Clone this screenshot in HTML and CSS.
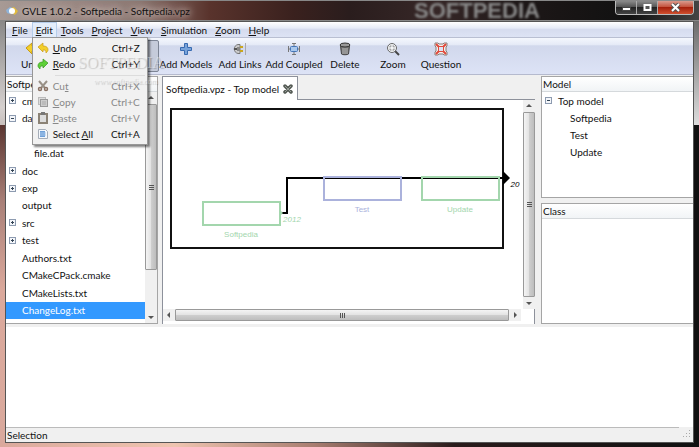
FILE: index.html
```html
<!DOCTYPE html>
<html lang="en">
<head>
  <meta charset="utf-8">
  <title>GVLE 1.0.2 - Softpedia - Softpedia.vpz</title>
  <link rel="stylesheet" href="styles.css">
</head>
<body>
  <div class="window">
    <header class="titlebar">
      <svg class="app-icon" width="12" height="10" viewBox="0 0 12 10">
        <path d="M0 4l4-3 3 1-3 6-3-1z" fill="#8fb3d9"/>
        <path d="M12 5L8 1 5 2l3 7 2-1z" fill="#e0b93c"/>
        <circle cx="6" cy="5" r="3" fill="#fff"/>
      </svg>
      <h1 class="title">GVLE 1.0.2 - Softpedia - Softpedia.vpz</h1>
      <span class="glass-mark">SOFTPEDIA</span>
      <div class="window-buttons">
        <button class="win-btn" aria-label="Minimize">
          <svg width="11" height="9" viewBox="0 0 11 9"><rect x="1.5" y="4.500" width="8" height="3" fill="#fff" stroke="#444"/></svg>
        </button>
        <button class="win-btn" aria-label="Maximize">
          <svg width="11" height="9" viewBox="0 0 11 9"><rect x="2.500" y="2" width="6" height="5" fill="#555" stroke="#fff" stroke-width="2"/></svg>
        </button>
        <button class="win-btn close" aria-label="Close">
          <svg width="11" height="9" viewBox="0 0 11 9"><path d="M2 1l7 7M9 1L2 8" stroke="#555" stroke-width="4"/><path d="M2 1l7 7M9 1L2 8" stroke="#fff" stroke-width="2"/></svg>
        </button>
      </div>
    </header>

    <div class="client">
      <nav class="menubar">
        <button class="menu-btn"><u>F</u>ile</button>
        <div class="menu-wrap">
          <button class="menu-btn open" aria-expanded="true"><u>E</u>dit</button>
          <div class="dropdown" role="menu">
            <button class="item" role="menuitem">
              <svg width="12" height="12" viewBox="0 0 12 12"><path d="M1 5l5-4v3c4 0 5 2 5 4 0 1-1 2-2 3 0-3-1-3-3-3v2z" fill="#f3cf2a" stroke="#c99a14" stroke-width=".7"/></svg>
              <span><u>U</u>ndo</span><kbd>Ctrl+Z</kbd>
            </button>
            <button class="item" role="menuitem">
              <svg width="12" height="12" viewBox="0 0 12 12"><path d="M11 5L6 1v3C2 4 1 6 1 8c0 1 1 2 2 3 0-3 1-3 3-3v2z" fill="#5fd038" stroke="#379420" stroke-width=".7"/></svg>
              <span><u>R</u>edo</span><kbd>Ctrl+Y</kbd>
            </button>
            <hr>
            <button class="item" role="menuitem" disabled>
              <svg width="12" height="12" viewBox="0 0 12 12"><path d="M2 1l6 7M10 1L4 8" stroke="#999187" stroke-width="2"/><circle cx="3" cy="9" r="1.500" fill="none" stroke="#8a7264" stroke-width="1.500"/><circle cx="9" cy="9" r="1.500" fill="none" stroke="#8a7264" stroke-width="1.500"/></svg>
              <span>Cu<u>t</u></span><kbd>Ctrl+X</kbd>
            </button>
            <button class="item" role="menuitem" disabled>
              <svg width="12" height="12" viewBox="0 0 12 12"><rect x="1.500" y="1.500" width="7" height="7" fill="#ddd" stroke="#bbb"/><rect x="3.500" y="3.500" width="7" height="7" fill="#ccc" stroke="#999"/><path d="M5 6h4M5 8h4" stroke="#aaa"/></svg>
              <span><u>C</u>opy</span><kbd>Ctrl+C</kbd>
            </button>
            <button class="item" role="menuitem" disabled>
              <svg width="12" height="12" viewBox="0 0 12 12"><rect x="2" y="2" width="8" height="9" fill="#ddd" stroke="#8b8275" stroke-width="2"/><rect x="4" y="0" width="4" height="3" fill="#777"/></svg>
              <span><u>P</u>aste</span><kbd>Ctrl+V</kbd>
            </button>
            <button class="item" role="menuitem">
              <svg width="12" height="12" viewBox="0 0 12 12"><path d="M1.500 1.500h7l2 2v7h-9z" fill="#f4f7fb" stroke="#a5adb8"/><path d="M3 3h5v6H3z" fill="#6fa0d8"/><path d="M3 5h6M3 7h6" stroke="#a9c8ec"/></svg>
              <span>Select <u>A</u>ll</span><kbd>Ctrl+A</kbd>
            </button>
            <span class="mark">SOFTPEDIA</span>
            <span class="mark-url">www.softpedia.com</span>
          </div>
        </div>
        <button class="menu-btn"><u>T</u>ools</button>
        <button class="menu-btn"><u>P</u>roject</button>
        <button class="menu-btn"><u>V</u>iew</button>
        <button class="menu-btn"><u>S</u>imulation</button>
        <button class="menu-btn"><u>Z</u>oom</button>
        <button class="menu-btn"><u>H</u>elp</button>
      </nav>

      <div class="toolbar">
        <button class="tool">
          <svg width="14" height="14" viewBox="0 0 14 14"><path d="M0 6l6-5v3c5 0 7 2 7 5 0 1-1 3-2 4 0-4-2-4-5-4v3z" fill="#f3cf2a" stroke="#c99a14"/></svg>
          Undo
        </button>
        <button class="tool" aria-label="Redo"></button>
        <button class="tool wide pressed" aria-label="Select"></button>
        <button class="tool wide">
          <svg width="14" height="14" viewBox="0 0 14 14"><path d="M5.500 1.500h3v4h4v3h-4v4h-3v-4h-4v-3h4z" fill="#78a3da" stroke="#386bb0"/></svg>
          Add Models
        </button>
        <button class="tool wide">
          <svg width="14" height="14" viewBox="0 0 14 14"><path d="M7 2.500H5c-5 1-5 8 0 9h2z" fill="#ccc" stroke="#777"/><path d="M1 7h3" stroke="#555" stroke-width="2"/><path d="M7 5h3M7 9h3" stroke="#c9a61e" stroke-width="2"/><path d="M4 5h3v4H4z" fill="#888"/><path d="M12.500 1v12" stroke="#aaa"/></svg>
          Add Links
        </button>
        <button class="tool wide">
          <svg width="14" height="14" viewBox="0 0 14 14"><path d="M1.500 4v6M12.500 4v6M1 7h3M10 7h3M5 1.500h4M5 12.500h4M7 1v3M7 10v3" stroke="#777"/><rect x="3.500" y="4.500" width="7" height="5" rx="1" fill="#a9c8ed" stroke="#4677b8"/></svg>
          Add Coupled
        </button>
        <button class="tool">
          <svg width="14" height="14" viewBox="0 0 14 14"><path d="M2.500 4l1 8c1 1 6 1 7 0l1-8z" fill="#777" stroke="#444"/><path d="M5 6v6M7 6v6M9 6v6" stroke="#b5b5b5"/><ellipse cx="7" cy="3" rx="5" ry="2" fill="#999" stroke="#333"/></svg>
          Delete
        </button>
        <button class="tool">
          <svg width="14" height="14" viewBox="0 0 14 14"><path d="M9 9l4 4" stroke="#444" stroke-width="2"/><circle cx="6" cy="6" r="4.500" fill="#f3f5f7" stroke="#666"/><path d="M4 5.500V4h1.500M6.500 4H8v1.500M8 6.500V8H6.500M5.500 8H4V6.500" fill="none" stroke="#888"/></svg>
          Zoom
        </button>
        <button class="tool">
          <svg width="14" height="14" viewBox="0 0 14 14"><path d="M1 1h3l1 1h4l1-1h3v3l-1 1v4l1 1v3h-3l-1-1H5l-1 1H1v-3l1-1V5L1 4z" fill="#f5f0ec" stroke="#8a7d78"/><rect x="4.500" y="4.500" width="5" height="5" fill="#dce3f4" stroke="#e04a3c"/><path d="M2 2l3 3M12 2L9 5M2 12l3-3M12 12L9 9" stroke="#e04a3c" stroke-width="2"/></svg>
          Question
        </button>
      </div>

      <main class="panes">
        <section class="pane files">
          <h2 class="pane-title">Softpedia</h2>
          <div class="files-body">
            <ul class="tree">
              <li><i class="toggle plus"></i>cmake</li>
              <li><i class="toggle"></i>data</li>
              <li></li>
              <li class="child">file.dat</li>
              <li><i class="toggle plus"></i>doc</li>
              <li><i class="toggle plus"></i>exp</li>
              <li>output</li>
              <li><i class="toggle plus"></i>src</li>
              <li><i class="toggle plus"></i>test</li>
              <li>Authors.txt</li>
              <li>CMakeCPack.cmake</li>
              <li>CMakeLists.txt</li>
              <li class="selected">ChangeLog.txt</li>
            </ul>
            <div class="vscroll files-scroll">
              <i class="arrow up"></i>
              <div class="thumb"><i class="grip"></i></div>
              <i class="arrow down"></i>
            </div>
          </div>
        </section>

        <section class="notebook">
          <div class="tabs">
            <div class="tab">
              Softpedia.vpz - Top model
              <button class="tab-close" aria-label="Close tab">
                <svg width="10" height="10" viewBox="0 0 10 10"><path d="M2 2l6 6M8 2L2 8" stroke="#555b55" stroke-width="3.500" stroke-linecap="round"/><path d="M2 2l6 6M8 2L2 8" stroke="#979d97"/></svg>
              </button>
            </div>
            <div class="tabs-rest"></div>
          </div>
          <div class="sheet">
            <svg class="diagram" width="360" height="208" viewBox="163 100 360 208">
              <rect x="171" y="109" width="332" height="139" fill="none" stroke="#111" stroke-width="2"/>
              <path d="M281 213h6v-35h216" fill="none" stroke="#000" stroke-width="2"/>
              <path d="M503 171l7 7-7 7z"/>
              <path d="M280 210l3 3-3 3z" fill="#a3d6ad"/>
              <g fill="none" stroke-width="2">
                <rect x="203" y="202" width="77" height="23" stroke="#a3d6ad"/>
                <rect x="324" y="177" width="77" height="23" stroke="#abb2dc"/>
                <rect x="422" y="177" width="77" height="23" stroke="#a3d6ad"/>
              </g>
              <g class="labels" text-anchor="middle">
                <text class="green" x="241" y="237">Softpedia</text>
                <text class="blue" x="362" y="212">Test</text>
                <text class="green" x="460" y="212">Update</text>
                <text class="green port" x="292" y="222">2012</text>
                <text class="port" x="515" y="187">20</text>
              </g>
            </svg>
            <div class="vscroll">
              <i class="arrow up"></i>
              <div class="thumb"><i class="grip"></i></div>
              <i class="arrow down"></i>
            </div>
            <div class="hscroll">
              <i class="arrow left"></i>
              <div class="thumb"><i class="grip"></i></div>
              <i class="arrow right"></i>
            </div>
          </div>
        </section>

        <aside class="side">
          <section class="pane model">
            <h2 class="pane-title">Model</h2>
            <ul class="tree">
              <li><i class="toggle"></i>Top model</li>
              <li class="child">Softpedia</li>
              <li class="child">Test</li>
              <li class="child">Update</li>
            </ul>
          </section>
          <section class="pane class">
            <h2 class="pane-title">Class</h2>
          </section>
        </aside>
      </main>

      <div class="output"></div>
      <footer class="status">
        <span class="status-text">Selection</span>
        <svg class="size-grip" width="14" height="12" viewBox="0 0 14 12"><path d="M10 3h1v1h-1zM7 6h1v1H7zM10 6h1v1h-1zM4 9h1v1H4zM7 9h1v1H7zM10 9h1v1h-1z" fill="#aaa"/></svg>
      </footer>
    </div>
  </div>
</body>
</html>
```
FILE: styles.css
```css
* {
  box-sizing: border-box;
}

body {
  margin: 0;
  font-family: Lato, "Open Sans", sans-serif;
  font-size: 10px;
  line-height: 14px;
  color: #111;
}

button {
  margin: 0;
  padding: 0;
  border: 0;
  background: none;
  font: inherit;
  color: inherit;
}

svg {
  display: block;
  flex: none;
}

h1, h2, ul {
  margin: 0;
  padding: 0;
  font-size: inherit;
  font-weight: normal;
  list-style: none;
}

/* window frame */
.window {
  display: flex;
  flex-direction: column;
  height: 100vh;
  padding: 0 5px 4px;
  background:
    linear-gradient(90deg, #dba99c, #efc4b0 25%, #a87d70 45%, #2a1b1b 65%, #111) bottom / 100% 4px no-repeat,
    linear-gradient(#555, #ddd 28%, #111 28%) right / 5px 100% no-repeat,
    linear-gradient(#777, #d5d0ce 24%, #c8c0bd 28%, #5b3631 28%, #a98078 45%, #dba99c 65%, #d9a99d) left / 5px 100% no-repeat,
    #222;
}

.titlebar {
  display: flex;
  align-items: center;
  position: relative;
  flex: none;
  height: 21px;
  margin: 0 -5px;
  padding-left: 6px;
  border-top: 1px solid #888;
  border-bottom: 1px solid #888;
  background: linear-gradient(90deg, #a79a95, #8c7771 20%, #59332c 30%, #3a211e 42%, #2a1d1d 50%, #362727 62%, #1d1717 75%, #111 90%, #444);
}

.title {
  margin-left: 4px;
  text-shadow: 0 0 6px #d6c7c1, 0 0 8px #d6c7c1;
}

.glass-mark {
  position: absolute;
  left: 414px;
  top: 0;
  font-family: "Liberation Sans", sans-serif;
  font-size: 22px;
  font-weight: bold;
  line-height: 20px;
  color: #888;
  filter: blur(1px);
}

.window-buttons {
  display: flex;
  align-self: flex-start;
  margin: 0 5px 0 auto;
  border: 1px solid #bbb;
  border-top: 0;
  border-radius: 0 0 4px 4px;
  overflow: hidden;
}

.win-btn {
  display: grid;
  place-items: center;
  width: 21px;
  height: 13px;
  border-right: 1px solid #aaa;
  background: linear-gradient(#8a8a8a, #555 45%, #222 50%, #444);
}

.win-btn.close {
  width: 35px;
  border-right: 0;
  background: linear-gradient(#d99a8d, #c4523d 45%, #a5200c 50%, #d0502f);
}

.client {
  display: flex;
  flex: 1;
  flex-direction: column;
  min-height: 0;
  border: 1px solid #555;
  background: #f0f0f0;
}

/* menu */
.menubar {
  display: flex;
  flex: none;
  height: 16px;
  padding-left: 2px;
  background: linear-gradient(#fff, #e6ebf7 40%, #d6dcef 50%, #dde3f4);
  border-bottom: 1px solid #b9bfd2;
}

.menu-btn {
  height: 15px;
  padding: 0 4px;
  white-space: nowrap;
}

.menu-btn.open {
  border: 1px solid #b5cdea;
  border-bottom: 0;
  padding: 0 3px;
  background: #e3edfa;
}

.menu-wrap {
  position: relative;
}

.dropdown {
  position: absolute;
  z-index: 2;
  top: 15px;
  left: 0;
  width: 116px;
  padding: 2px;
  border: 1px solid #979797;
  background: #f1f1f1;
  box-shadow: 2px 2px 2px rgba(0, 0, 0, 0.5);
}

.item {
  display: flex;
  align-items: center;
  gap: 4px;
  width: 100%;
  height: 16px;
  padding: 0 5px 0 2px;
}

.item:disabled {
  color: #888;
}

.item kbd {
  margin-left: auto;
  font: inherit;
}

.dropdown hr {
  height: 1px;
  margin: 3px 0 2px 20px;
  border: 0;
  background: #dcdcdc;
}

.mark,
.mark-url {
  position: absolute;
  font-family: "Liberation Serif", serif;
  color: rgba(255, 255, 255, 0.4);
  text-shadow: 1px 1px 1px rgba(0, 0, 0, 0.2);
  pointer-events: none;
}

.mark {
  left: 45px;
  top: 18px;
  font-size: 16px;
}

.mark-url {
  left: 61px;
  top: 37px;
  font-size: 8px;
}

/* toolbar */
.toolbar {
  display: flex;
  flex: none;
  height: 37px;
  padding: 2px 0 2px 3px;
  background: linear-gradient(#f4f7fd, #e6ebf7 18%, #d1d8ec 22%, #dde3f6);
  border-bottom: 1px solid #b5bace;
}

.tool {
  display: flex;
  flex-direction: column;
  align-items: center;
  gap: 1px;
  width: 48px;
  padding-top: 2px;
  white-space: nowrap;
}

.tool.wide {
  width: 54px;
}

.tool.pressed {
  border: 1px solid #7d8595;
  border-radius: 2px;
  background: #c5cbda;
}

/* three columns */
.panes {
  display: grid;
  grid-template-columns: 152px 1fr 152px;
  flex: 1;
  column-gap: 4px;
  min-height: 0;
  padding-top: 1px;
}

.pane {
  display: flex;
  flex-direction: column;
  min-width: 0;
  border: 1px solid #a5a5a5;
  background: #fff;
}

.pane-title {
  flex: none;
  height: 15px;
  padding-left: 1px;
  border-bottom: 1px solid #d5d9dc;
  background: linear-gradient(#fff, #f1f4f6);
}

.files-body {
  display: flex;
  flex: 1;
  min-height: 0;
}

.files {
  border-left: 0;
}

.files .tree {
  display: grid;
  grid-auto-rows: 1fr;
  flex: 1;
  padding-bottom: 4px;
}

.tree li {
  display: flex;
  align-items: center;
  position: relative;
  height: 17px;
  padding-left: 16px;
}

.files .tree li {
  height: auto;
}

.tree .child,
.files .tree .child {
  padding-left: 28px;
}

.tree .selected {
  background: #3399ff;
  color: #fff;
}

.toggle {
  position: absolute;
  left: 3px;
  width: 7px;
  height: 7px;
  border: 1px solid #8d9bb0;
  background: linear-gradient(#345, #345) center / 3px 1px no-repeat, #f4f6fa;
}

.toggle.plus {
  background:
    linear-gradient(#345, #345) center / 3px 1px no-repeat,
    linear-gradient(#345, #345) center / 1px 3px no-repeat,
    #f4f6fa;
}

/* scrollbars */
.vscroll,
.hscroll {
  display: flex;
  background: #f0f0f0;
}

.vscroll {
  flex-direction: column;
  width: 12px;
}

.thumb {
  display: grid;
  place-items: center;
  flex: 1;
  border: 1px solid #999;
  border-radius: 1px;
  background: linear-gradient(90deg, #f4f4f4, #e4e4e4 45%, #cfcfcf 50%, #bdbdbd);
}

.hscroll .thumb {
  background: linear-gradient(#f4f4f4, #e4e4e4 45%, #cfcfcf 50%, #bdbdbd);
}

.files-scroll .thumb {
  flex: none;
  height: 166px;
}

.files-scroll .down {
  margin-top: auto;
}

.grip {
  width: 5px;
  height: 5px;
  background: repeating-linear-gradient(#555 0 1px, transparent 1px 2px);
}

.hscroll .grip {
  background: repeating-linear-gradient(90deg, #555 0 1px, transparent 1px 2px);
}

.arrow {
  display: grid;
  place-items: center;
  width: 12px;
  height: 12px;
}

.arrow::before {
  content: "";
  border: 3px solid transparent;
  border-bottom: 0;
  border-top-color: #555;
}

.arrow.up {
  transform: rotate(180deg);
}

.arrow.left {
  transform: rotate(90deg);
}

.arrow.right {
  transform: rotate(-90deg);
}

/* notebook */
.notebook {
  display: flex;
  flex-direction: column;
  min-width: 0;
  margin-right: 2px;
}

.tabs {
  display: flex;
  flex: none;
  height: 24px;
}

.tab {
  display: flex;
  align-items: center;
  gap: 4px;
  padding: 0 4px 0 3px;
  border: 1px solid #8d919b;
  border-bottom: 0;
  background: #fff;
  white-space: nowrap;
}

.tabs-rest {
  flex: 1;
  border-bottom: 1px solid #8d919b;
}

.sheet {
  display: grid;
  grid-template: 1fr 12px / 1fr 12px;
  flex: 1;
  min-height: 0;
  padding-bottom: 3px;
  border: 1px solid #8d919b;
  border-top: 0;
  border-bottom: 0;
  background: #fff;
}

.sheet .hscroll {
  margin-right: 2px;
}

.labels {
  font-family: "Liberation Sans", sans-serif;
  font-size: 8px;
}

.green {
  fill: #a3d6ad;
}

.blue {
  fill: #abb2dc;
}

.port {
  font-style: italic;
}

/* right column */
.side {
  display: flex;
  flex-direction: column;
  gap: 5px;
  min-height: 0;
}

.side .pane {
  flex: 1;
  border-right: 0;
}

/* bottom */
.output {
  flex: none;
  height: 100px;
  margin-top: 3px;
  background: #fff;
}

.status {
  display: flex;
  justify-content: space-between;
  flex: none;
  height: 15px;
}

.status-text {
  flex: 1;
  padding-left: 1px;
  border-top: 1px solid #bbb;
}
```
